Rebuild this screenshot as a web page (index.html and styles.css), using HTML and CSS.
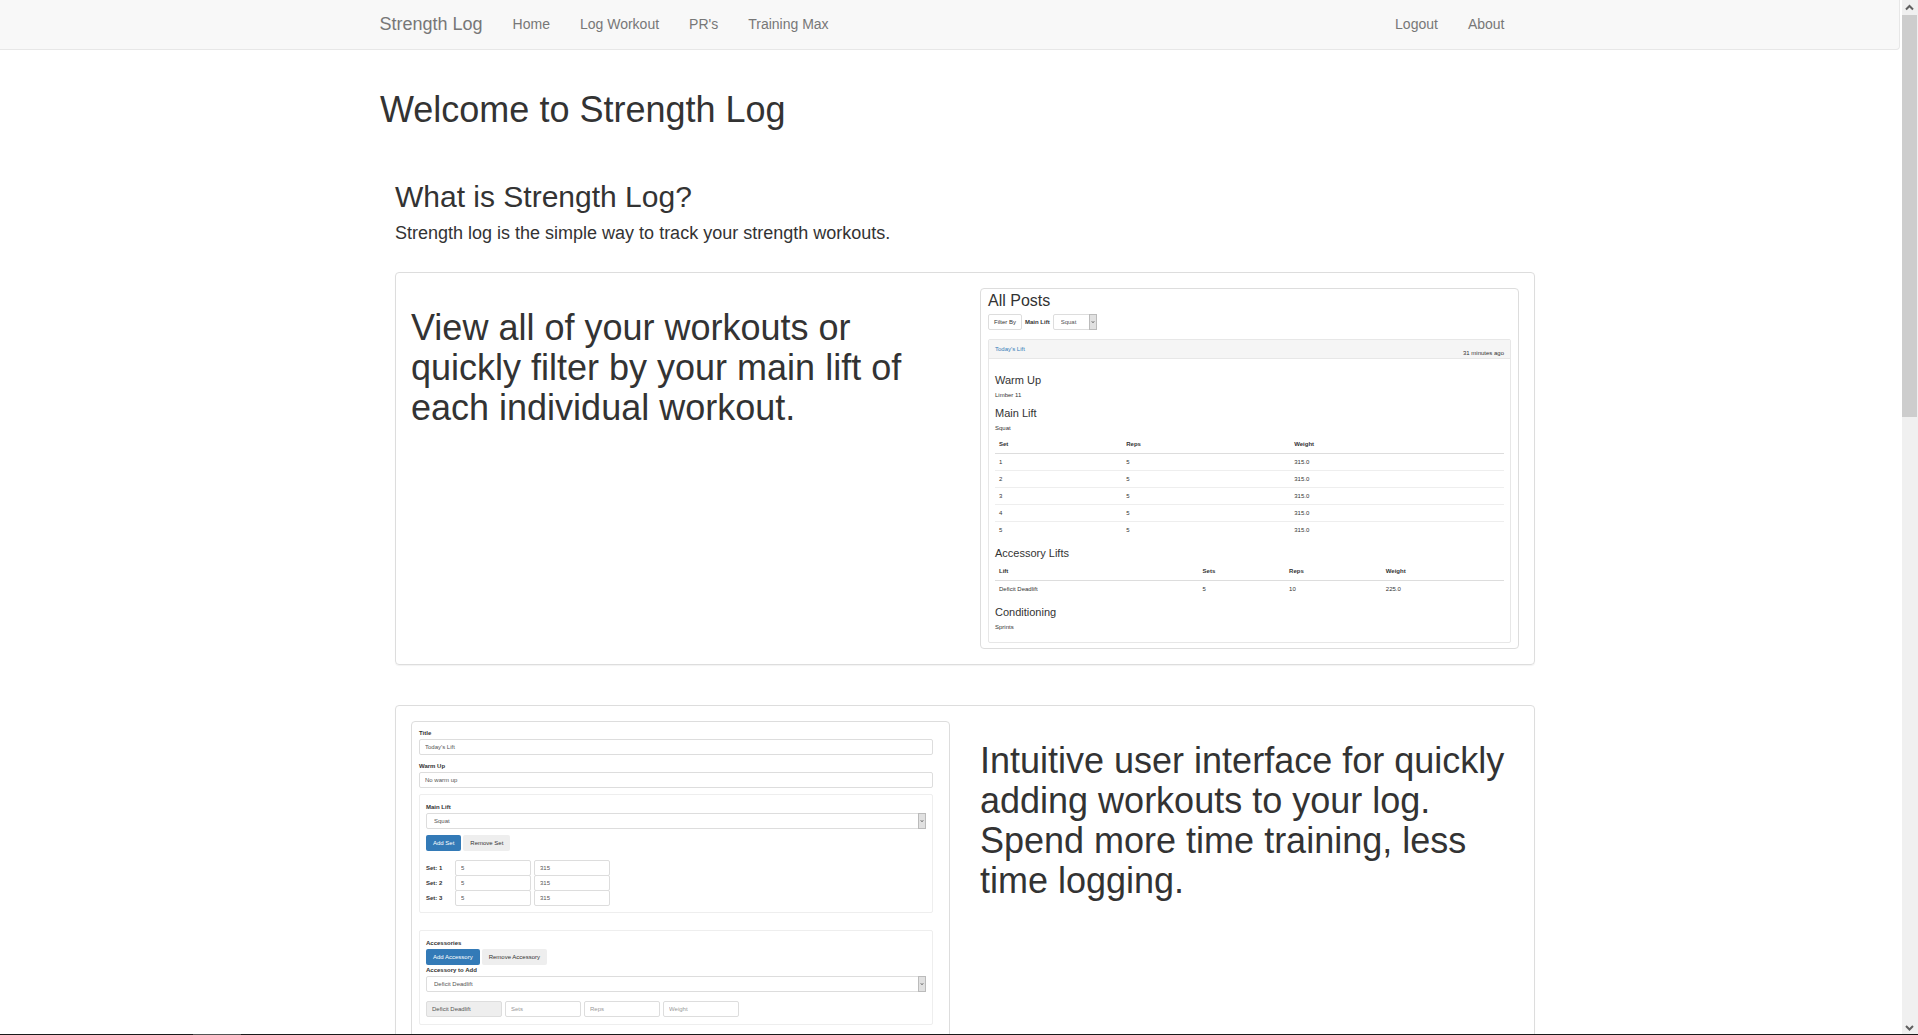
FILE: index.html
```html
<!DOCTYPE html>
<html lang="en">
<head>
<meta charset="utf-8">
<meta name="viewport" content="width=device-width, initial-scale=1">
<title>Strength Log</title>
<link rel="stylesheet" href="styles.css">
</head>
<body>
<div class="page">
  <nav class="navbar">
    <div class="container navbar-row">
      <a class="brand" href="#">Strength Log</a>
      <ul class="nav">
        <li><a href="#">Home</a></li>
        <li><a href="#">Log Workout</a></li>
        <li><a href="#">PR's</a></li>
        <li><a href="#">Training Max</a></li>
      </ul>
      <ul class="nav nav-right">
        <li><a href="#">Logout</a></li>
        <li><a href="#">About</a></li>
      </ul>
    </div>
  </nav>

  <main class="container">
    <h1>Welcome to Strength Log</h1>
    <section class="intro">
      <h2>What is Strength Log?</h2>
      <h4>Strength log is the simple way to track your strength workouts.</h4>

      <div class="panel">
        <h1>View all of your workouts or quickly filter by your main lift of each individual workout.</h1>
        <div class="preview preview-posts">
          <h3 class="posts-title">All Posts</h3>
          <div class="filter">
            <button class="btn btn-outline" type="button">Filter By</button>
            <label for="filter-lift">Main Lift</label>
            <span class="select"><select id="filter-lift"><option>Squat</option></select><svg viewBox="0 0 7 14"><path d="M2 6l1.500 2L5 6"/></svg></span>
          </div>
          <article class="post">
            <header class="post-head">
              <a href="#">Today's Lift</a>
              <span class="post-age">31 minutes ago</span>
            </header>
            <div class="post-body">
              <h5>Warm Up</h5>
              <p>Limber 11</p>
              <h5>Main Lift</h5>
              <p>Squat</p>
              <table class="sets">
                <thead><tr><th>Set</th><th>Reps</th><th>Weight</th></tr></thead>
                <tbody>
                  <tr><td>1</td><td>5</td><td>315.0</td></tr>
                  <tr><td>2</td><td>5</td><td>315.0</td></tr>
                  <tr><td>3</td><td>5</td><td>315.0</td></tr>
                  <tr><td>4</td><td>5</td><td>315.0</td></tr>
                  <tr><td>5</td><td>5</td><td>315.0</td></tr>
                </tbody>
              </table>
              <h5>Accessory Lifts</h5>
              <table class="accessories">
                <thead><tr><th>Lift</th><th>Sets</th><th>Reps</th><th>Weight</th></tr></thead>
                <tbody>
                  <tr><td>Deficit Deadlift</td><td>5</td><td>10</td><td>225.0</td></tr>
                </tbody>
              </table>
              <h5>Conditioning</h5>
              <p>Sprints</p>
            </div>
          </article>
        </div>
      </div>

      <div class="panel">
        <form class="preview preview-form">
          <div class="field">
            <label for="title">Title</label>
            <input id="title" type="text" value="Today's Lift">
          </div>
          <div class="field">
            <label for="warmup">Warm Up</label>
            <input id="warmup" type="text" value="No warm up">
          </div>
          <div class="group">
            <label for="main-lift">Main Lift</label>
            <span class="select"><select id="main-lift"><option>Squat</option></select><svg viewBox="0 0 7 14"><path d="M2 6l1.500 2L5 6"/></svg></span>
            <div class="actions">
              <button class="btn btn-primary" type="button">Add Set</button>
              <button class="btn" type="button">Remove Set</button>
            </div>
            <div class="set-row"><label for="s1">Set: 1</label><input id="s1" type="text" value="5"><input type="text" value="315" aria-label="Set 1 weight"></div>
            <div class="set-row"><label for="s2">Set: 2</label><input id="s2" type="text" value="5"><input type="text" value="315" aria-label="Set 2 weight"></div>
            <div class="set-row"><label for="s3">Set: 3</label><input id="s3" type="text" value="5"><input type="text" value="315" aria-label="Set 3 weight"></div>
          </div>
          <div class="group group-accessories">
            <span class="legend">Accessories</span>
            <div class="actions">
              <button class="btn btn-primary" type="button">Add Accessory</button>
              <button class="btn" type="button">Remove Accessory</button>
            </div>
            <label for="accessory">Accessory to Add</label>
            <span class="select"><select id="accessory"><option>Deficit Deadlift</option></select><svg viewBox="0 0 7 14"><path d="M2 6l1.500 2L5 6"/></svg></span>
            <div class="accessory-row">
              <input type="text" value="Deficit Deadlift" readonly aria-label="Accessory">
              <input type="text" placeholder="Sets" aria-label="Sets">
              <input type="text" placeholder="Reps" aria-label="Reps">
              <input type="text" placeholder="Weight" aria-label="Weight">
            </div>
          </div>
        </form>
        <h1>Intuitive user interface for quickly adding workouts to your log. Spend more time training, less time logging.</h1>
      </div>
    </section>
  </main>
</div>

<div class="scrollbar" aria-hidden="true">
  <svg viewBox="0 0 15 15"><path d="M4 9.500l3.500-3.500 3.500 3.500"/></svg>
  <div class="scroll-track"><div class="scroll-thumb"></div></div>
  <svg viewBox="0 0 15 15"><path d="M4 6l3.500 3.500L11 6"/></svg>
</div>
<div class="taskbar" aria-hidden="true"></div>
</body>
</html>
```

FILE: styles.css
```css
* { box-sizing: border-box; }

body {
  margin: 0;
  height: 100vh;
  overflow: hidden;
  background: #fff;
  color: #333;
  font: 14px/20px "Liberation Sans", Arial, sans-serif;
}

.page { padding-right: 18px; }
.container { max-width: 1170px; margin: 0 auto; padding: 0 15px; }

h1, h2, h3, h4, h5, p { margin: 0; font-weight: 400; }
h1 { font-size: 36px; line-height: 40px; margin: 20px 0 10px; }
h2 { font-size: 30px; line-height: 33px; margin-bottom: 10px; }
h4 { font-size: 18px; line-height: 20px; }

/* Navigation */
.navbar {
  height: 50px;
  margin-bottom: 40px;
  background: #f8f8f8;
  border: 1px solid #e7e7e7;
  border-width: 0 1px 1px 0;
  border-radius: 0 0 4px 0;
}
.navbar-row { display: flex; align-items: center; height: 48px; }
.navbar a { color: #777; text-decoration: none; }
.brand { font-size: 18px; margin-right: 15px; }
.nav { display: flex; margin: 0; padding: 0; list-style: none; }
.nav a { display: block; padding: 0 15px; }
.nav-right { margin-left: auto; }

/* Intro and feature panels */
.intro { padding: 40px 0 0 15px; margin-right: -15px; }
.panel {
  display: grid;
  grid-template-columns: 1fr 1fr;
  gap: 30px;
  align-items: start;
  margin: 29px 0 40px;
  padding: 15px;
  border: 1px solid #ddd;
  border-radius: 4px;
  box-shadow: 0 1px 1px rgba(0, 0, 0, .05);
}

/* Small app previews */
.preview {
  min-width: 0;
  border: 1px solid #ddd;
  border-radius: 4px;
  font-size: 6px;
  line-height: 10px;
}
.preview label, .legend { font-weight: 700; }
.preview input, .preview select {
  display: block;
  width: 100%;
  height: 16px;
  margin: 0;
  padding: 0 5px;
  appearance: none;
  background: #fff;
  border: 1px solid #ddd;
  border-radius: 2px;
  color: #555;
  font: inherit;
}
.preview select { padding: 0 7px; }
.preview input::placeholder { color: #999; }
.preview input[readonly] { background: #eee; }

.select { display: block; position: relative; }
.select svg {
  position: absolute;
  top: 0;
  right: 0;
  width: 8px;
  height: 16px;
  background: #e1e1e1;
  border: 1px solid #bbb;
  fill: none;
  stroke: #666;
}

.btn {
  height: 16px;
  padding: 0 7px;
  border: 0;
  border-radius: 2px;
  background: #eee;
  color: #333;
  font: inherit;
}
.btn-primary { background: #337ab7; color: #fff; }
.btn-outline { background: #fff; border: 1px solid #ddd; padding: 0 5px; }

/* Posts preview */
.preview-posts { padding: 2px 7px 5px; }
.posts-title { font-size: 16px; line-height: 20px; }
.filter { display: flex; align-items: center; gap: 3px; margin: 3px 0 9px; }
.filter .select { width: 44px; }
.post { border: 1px solid #e7e7e7; border-radius: 2px; }
.post-head {
  display: flex;
  justify-content: space-between;
  height: 19px;
  padding: 4px 6px;
  background: #f5f5f5;
  border-bottom: 1px solid #e7e7e7;
}
.post-head a { color: #337ab7; text-decoration: none; }
.post-age { padding-top: 4px; }
.post-body { padding: 8px 6px 10px; }
.post-body h5 { margin-top: 7px; font-size: 11px; line-height: 13px; }
.post-body p { margin-top: 3px; }
.preview table {
  width: 100%;
  margin: 3px 0 9px;
  table-layout: fixed;
  border-collapse: collapse;
}
.preview th, .preview td { height: 17px; padding: 0 4px; text-align: left; }
.preview td { border-top: 1px solid #eee; }
.preview thead th { border-bottom: 1px solid #ddd; }
.sets th:nth-child(1) { width: 25%; }
.sets th:nth-child(2) { width: 33%; }
.accessories th:nth-child(1) { width: 40%; }
.accessories th:nth-child(2) { width: 17%; }
.accessories th:nth-child(3) { width: 19%; }

/* Log form preview */
.preview-form { padding: 6px 16px 20px 7px; }
.field { margin-bottom: 6px; }
.field label, .group > label, .legend { display: block; margin-bottom: 1px; }
.group { padding: 7px 6px; border: 1px solid #eee; border-radius: 2px; }
.actions { display: flex; gap: 2px; margin: 6px 0 9px; }
.set-row { display: flex; gap: 3px; height: 15px; }
.set-row label { width: 26px; line-height: 16px; }
.set-row input, .accessory-row input { width: 76px; }
.group-accessories { margin-top: 17px; }
.group-accessories .actions { margin: 0; }
.accessory-row { display: flex; gap: 3px; margin-top: 9px; }

/* Window edges */
.scrollbar {
  position: fixed;
  top: 0;
  right: 0;
  bottom: 0;
  display: flex;
  flex-direction: column;
  width: 16px;
  padding-right: 1px;
  background: #f0f0f0;
}
.scrollbar svg { width: 15px; height: 15px; fill: none; stroke: #606060; stroke-width: 2; }
.scroll-track { flex: 1; }
.scroll-thumb { height: 40%; background: #cdcdcd; }
.taskbar {
  position: fixed;
  right: 0;
  bottom: 0;
  left: 0;
  height: 1px;
  background: linear-gradient(90deg, #1a1a1a 193px, #555 193px 241px, #1a1a1a 241px);
}
```
